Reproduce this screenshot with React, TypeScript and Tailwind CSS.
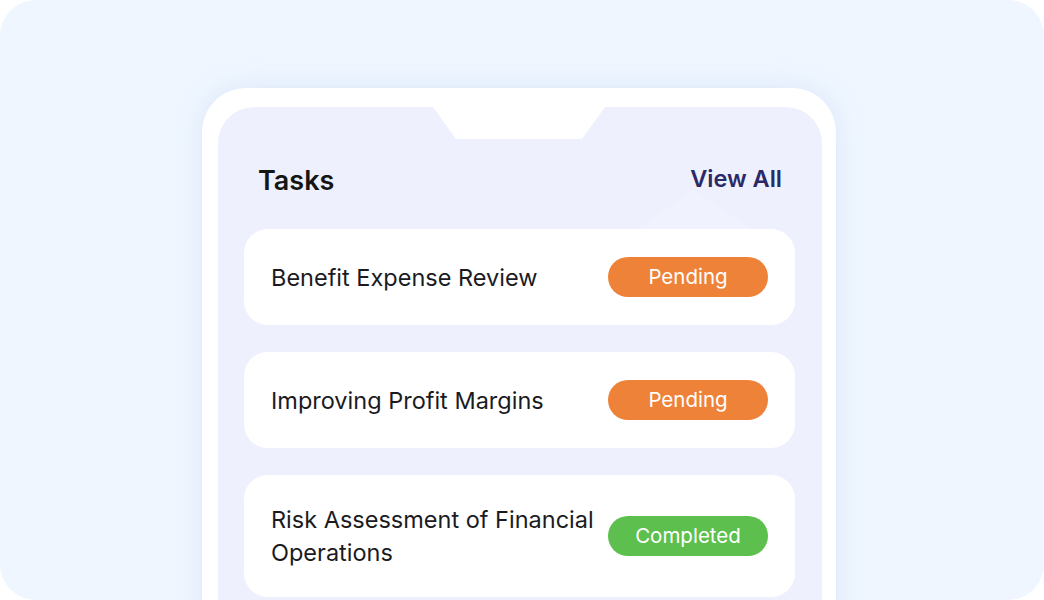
import React from "react";

type Task = { title: string; status: "Pending" | "Completed" };

const tasks: Task[] = [
  { title: "Benefit Expense Review", status: "Pending" },
  { title: "Improving Profit Margins", status: "Pending" },
  { title: "Risk Assessment of Financial Operations", status: "Completed" },
];

function StatusBadge({ status }: { status: Task["status"] }) {
  const color = status === "Pending" ? "bg-[#ee8239]" : "bg-[#5dbf4d]";
  return (
    <div
      className={`${color} flex h-[40px] w-[160px] shrink-0 items-center justify-center rounded-full text-[20.5px] text-white`}
    >
      {status}
    </div>
  );
}

function TaskCard({ task }: { task: Task }) {
  return (
    <div className="flex items-center gap-[12px] rounded-[24px] bg-white py-[28px] pl-[27px] pr-[27px]">
      <p className="flex-1 text-[23.5px] leading-[33px] text-[#1b1b1f]">
        {task.title}
      </p>
      <StatusBadge status={task.status} />
    </div>
  );
}

export default function App() {
  return (
    <div
      className="h-[600px] w-[1044px] bg-white"
      style={{ fontFamily: "Inter, 'Noto Sans', sans-serif" }}
    >
      <div className="flex h-full w-full justify-center overflow-hidden rounded-[36px] bg-[#eff6ff] pr-[6px] pt-[88px]">
        <div className="h-[600px] w-[634px] shrink-0 rounded-[44px] bg-white pl-[16px] pr-[14px] pt-[19px] shadow-[0_0_24px_rgba(180,200,235,0.35)]">
          <div className="relative h-full rounded-[36px] bg-[#eef1fd] pl-[26px] pr-[27px] pt-[58px]">
            {/* notch */}
            <svg
              className="absolute left-[215px] top-0"
              width="172"
              height="32"
              viewBox="0 0 172 32"
            >
              <path d="M0 0 H172 L149 32 H23 Z" fill="#ffffff" />
            </svg>
            {/* faint glare below View All */}
            <svg
              className="absolute left-[418px] top-[83px]"
              width="116"
              height="40"
              viewBox="0 0 116 40"
            >
              <path d="M58 0 L116 40 H0 Z" fill="#ffffff" opacity="0.15" />
            </svg>
            <div className="relative flex items-center justify-between pl-[14px] pr-[13px]">
              <h2 className="text-[27px] font-semibold leading-[32px] text-[#151515]">
                Tasks
              </h2>
              <span className="-mt-[5px] text-[23.5px] font-semibold leading-[32px] text-[#2b2a66]">
                View All
              </span>
            </div>
            <div className="relative mt-[32px] flex flex-col gap-[27px]">
              {tasks.map((t) => (
                <TaskCard key={t.title} task={t} />
              ))}
            </div>
          </div>
        </div>
      </div>
    </div>
  );
}
